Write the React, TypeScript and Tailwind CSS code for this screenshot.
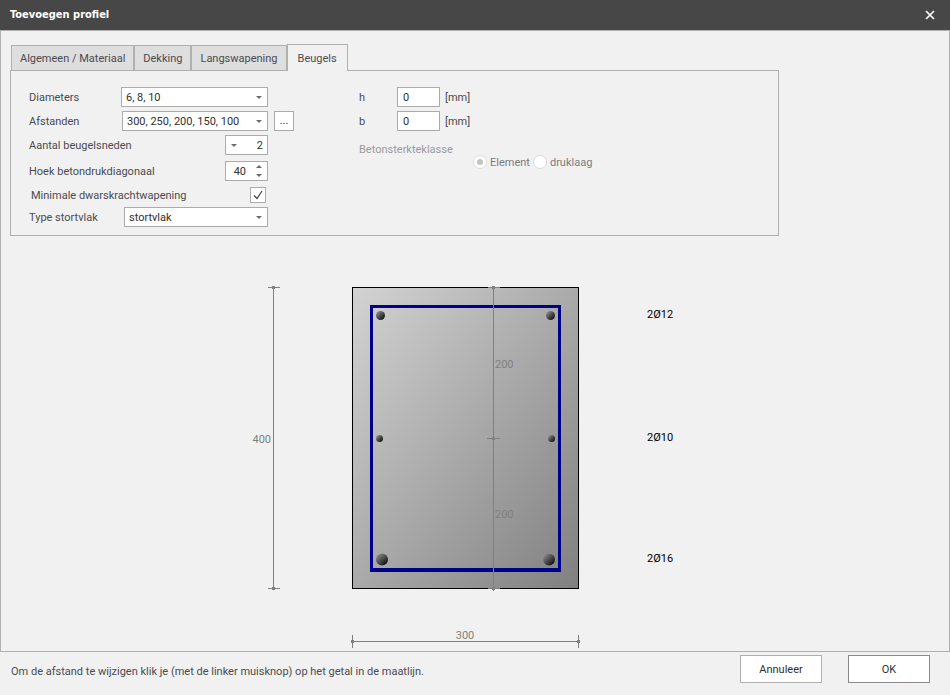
import React, { useState } from 'react';

const TABS = ['Algemeen / Materiaal', 'Dekking', 'Langswapening', 'Beugels'];

const BARS = [
  { x: 380.5, y: 315.5, r: 4.5 },
  { x: 550.5, y: 315.5, r: 4.5 },
  { x: 379.5, y: 438.5, r: 3.5 },
  { x: 551.5, y: 438.5, r: 3.5 },
  { x: 382, y: 559.5, r: 6 },
  { x: 549, y: 559.5, r: 6 },
];

function Caret({ up = false }: { up?: boolean }) {
  return (
    <svg width="6" height="3" viewBox="0 0 6 3" className="pointer-events-none" fill="#6a6a6a" aria-hidden="true">
      <path d={up ? 'M0 3 3 0l3 3z' : 'M0 0h6L3 3z'} />
    </svg>
  );
}

interface ComboProps {
  id: string;
  value: string;
  className: string;
  arrowLeft?: boolean;
}

function Combo({ id, value, className, arrowLeft = false }: ComboProps) {
  return (
    <div className={`relative h-5 ${className}`}>
      <select
        id={id}
        className={`block h-5 w-full appearance-none border border-[#ababab] bg-white pt-[2px] leading-4 text-[#303030] outline-none ${
          arrowLeft ? 'pr-1 pl-4 [text-align-last:right]' : 'pr-4 pl-1'
        }`}
      >
        <option>{value}</option>
      </select>
      <span className={`pointer-events-none absolute top-[9px] ${arrowLeft ? 'left-[6px]' : 'right-[6px]'}`}>
        <Caret />
      </span>
    </div>
  );
}

function SizeField({ id, label }: { id: string; label: string }) {
  return (
    <div className="flex h-5 items-center">
      <label htmlFor={id} className="w-[38px] pt-[2px]">{label}</label>
      <input
        id={id}
        defaultValue="0"
        className="h-5 w-[43px] border border-[#ababab] bg-white px-[5px] text-[#303030] outline-none"
      />
      <span className="ml-[5px] pt-[2px]">[mm]</span>
    </div>
  );
}

function ClassRadio({ id, label, checked }: { id: string; label: string; checked: boolean }) {
  return (
    <div className="flex h-[14px] items-center gap-[3px]">
      <input
        type="radio"
        id={id}
        name="betonsterkteklasse"
        defaultChecked={checked}
        disabled
        className="flex size-[14px] appearance-none items-center justify-center rounded-full border border-[#dcdcdc] bg-white before:size-[6px] before:rounded-full checked:before:bg-[#c4c4c4]"
      />
      <label htmlFor={id} className="pt-[2px] text-[#7b7b80]">{label}</label>
    </div>
  );
}

function CrossSection() {
  return (
    <svg
      width="450"
      height="370"
      viewBox="250 281 450 370"
      fontSize="11"
      className="block shrink-0"
      role="img"
      aria-label="Doorsnede 300 x 400"
    >
      <defs>
        <linearGradient id="concrete" x1="0" y1="0" x2="1" y2="1">
          <stop offset="0" stopColor="#d3d3d3" />
          <stop offset="1" stopColor="#808080" />
        </linearGradient>
        <linearGradient id="steel" x1="0" y1="0" x2="1" y2="1">
          <stop offset="0.1" stopColor="#8c8c8c" />
          <stop offset="0.9" stopColor="#0c0c0c" />
        </linearGradient>
      </defs>

      <rect x="352.5" y="287.5" width="226" height="301" fill="url(#concrete)" stroke="#000" shapeRendering="crispEdges" />

      {/* Beugel */}
      <path d="M370 305h191v267h-191zM373 308v260h185v-260z" fill="#00008b" fillRule="evenodd" />

      {BARS.map((bar) => (
        <circle key={`${bar.x}-${bar.y}`} cx={bar.x} cy={bar.y} r={bar.r} fill="url(#steel)" />
      ))}

      {/* Maatlijnen */}
      <g stroke="#808080" shapeRendering="crispEdges">
        <path d="M273.5 287v302M268 287.5h12M268 588.5h12" />
        <path d="M493.5 287v304M488 287.5h12M487 438.5h13M488 588.5h12" />
        <path d="M352 641.5h227M352.5 635v13M578.5 635v13" />
      </g>
      <g fill="#808080" shapeRendering="crispEdges">
        <path d="M272 286h3v3h-3zM272 587h3v3h-3z" />
        <path d="M492 286h3v3h-3zM492 437h3v3h-3zM492 587h3v3h-3z" />
        <path d="M351 640h3v3h-3zM577 640h3v3h-3z" />
      </g>
      <g fill="#808080">
        <text x="271" y="443" textAnchor="end">400</text>
        <text x="495" y="368">200</text>
        <text x="495" y="518">200</text>
        <text x="465" y="639" textAnchor="middle">300</text>
      </g>
      <g fill="#000">
        <text x="647" y="318">2Ø12</text>
        <text x="647" y="441">2Ø10</text>
        <text x="647" y="562">2Ø16</text>
      </g>
    </svg>
  );
}

export default function App() {
  const [angle, setAngle] = useState(40);
  const [active, setActive] = useState('Beugels');

  return (
    <div className="flex min-h-screen flex-col bg-[#f1f1f1] font-['Roboto','DejaVu_Sans',sans-serif] text-[11px] leading-4 text-[#4b4b50]">
      <header className="flex h-[30px] items-center justify-between bg-[#474747] pr-[15px] pl-[10px] text-white">
        <h1 className="font-['DejaVu_Sans_Condensed','DejaVu_Sans',sans-serif] font-bold">Toevoegen profiel</h1>
        <button type="button" aria-label="Sluiten">
          <svg width="10" height="10" viewBox="0 0 10 10" stroke="#fff" strokeWidth="1.7" aria-hidden="true">
            <path d="M1 1l8 8M9 1L1 9" />
          </svg>
        </button>
      </header>

      <main className="flex flex-1 flex-col border border-[#b0b0b0] px-[9px] pt-[13px]">
        <div role="tablist" className="z-10 -mb-px flex items-end">
          {TABS.map((tab) => (
            <button
              key={tab}
              type="button"
              role="tab"
              aria-selected={tab === active}
              onClick={() => setActive(tab)}
              className={
                tab === active
                  ? 'h-[27px] border border-b-0 border-[#b0b0b0] bg-[#f1f1f1] px-[10px] pt-[2px]'
                  : 'h-[26px] border border-[#b0b0b0] bg-[#dedede] px-2 pt-[2px] first:ml-px'
              }
            >
              {tab}
            </button>
          ))}
        </div>

        <section className="flex max-w-[769px] gap-[65px] border border-[#b0b0b0] pt-4 pb-2 pl-[18px]">
          <div className="flex w-[265px] flex-col gap-1">
            <div className="flex w-[239px] items-center justify-between">
              <label htmlFor="diameters" className="pt-[2px]">Diameters</label>
              <Combo id="diameters" value="6, 8, 10" className="w-[147px]" />
            </div>
            <div className="flex items-center justify-between">
              <label htmlFor="afstanden" className="pt-[2px]">Afstanden</label>
              <div className="flex gap-[6px]">
                <Combo id="afstanden" value="300, 250, 200, 150, 100" className="w-[146px]" />
                <button type="button" className="size-5 border border-[#ababab] bg-white text-center text-[#303030]">
                  ...
                </button>
              </div>
            </div>
            <div className="flex h-[22px] w-[239px] items-start justify-between">
              <label htmlFor="sneden" className="leading-[22px]">Aantal beugelsneden</label>
              <Combo id="sneden" value="2" className="w-[43px]" arrowLeft />
            </div>
            <div className="flex h-[22px] w-[239px] items-start justify-between">
              <label htmlFor="hoek" className="leading-[22px]">Hoek betondrukdiagonaal</label>
              <div className="flex h-5 w-[43px] border border-[#ababab] bg-white">
                <input
                  id="hoek"
                  value={angle}
                  onChange={(e) => setAngle(Number(e.target.value) || 0)}
                  className="w-5 flex-1 pt-[2px] text-right text-[#303030] outline-none"
                />
                <div className="flex w-[21px] flex-col items-center justify-center gap-[6px] pl-[5px]">
                  <button type="button" aria-label="Verhogen" onClick={() => setAngle(angle + 1)}>
                    <Caret up />
                  </button>
                  <button type="button" aria-label="Verlagen" onClick={() => setAngle(angle - 1)}>
                    <Caret />
                  </button>
                </div>
              </div>
            </div>
            <div className="flex h-4 w-[239px] items-center justify-between pr-[2px] pl-[2px]">
              <label htmlFor="minimaal" className="pt-[2px]">Minimale dwarskrachtwapening</label>
              <div className="relative size-4">
                <input
                  type="checkbox"
                  id="minimaal"
                  defaultChecked
                  className="peer block size-4 appearance-none border border-[#ababab] bg-white"
                />
                <svg
                  viewBox="0 0 16 16"
                  className="pointer-events-none absolute inset-0 hidden size-4 peer-checked:block"
                  fill="none"
                  stroke="#404040"
                  strokeWidth="1.2"
                  aria-hidden="true"
                >
                  <path d="M4 8.5l3 3L12 4" />
                </svg>
              </div>
            </div>
            <div className="flex w-[239px] items-center justify-between">
              <label htmlFor="stortvlak" className="pt-[2px]">Type stortvlak</label>
              <Combo id="stortvlak" value="stortvlak" className="w-[144px]" />
            </div>
          </div>

          <div className="flex flex-col gap-1">
            <SizeField id="h" label="h" />
            <SizeField id="b" label="b" />
            <div role="radiogroup" aria-labelledby="klasse" className="mt-[6px] flex h-7">
              <span id="klasse" className="w-[114px] leading-[18px] text-[#9a9a9e]">Betonsterkteklasse</span>
              <div className="flex items-end gap-[3px]">
                <ClassRadio id="element" label="Element" checked />
                <ClassRadio id="druklaag" label="druklaag" checked={false} />
              </div>
            </div>
          </div>
        </section>

        <div className="flex flex-1 items-end justify-center">
          <CrossSection />
        </div>
      </main>

      <footer className="flex h-[43px] items-start justify-between pt-[3px] pr-5 pl-[11px]">
        <p className="pt-[9px]">Om de afstand te wijzigen klik je (met de linker muisknop) op het getal in de maatlijn.</p>
        <div className="flex gap-[26px] text-[#303030]">
          <button type="button" className="h-7 w-[82px] border border-[#b0b0b0] bg-white pt-[2px]">Annuleer</button>
          <button type="button" className="h-7 w-[82px] border border-[#8a8a8a] bg-white pt-[2px]">OK</button>
        </div>
      </footer>
    </div>
  );
}
